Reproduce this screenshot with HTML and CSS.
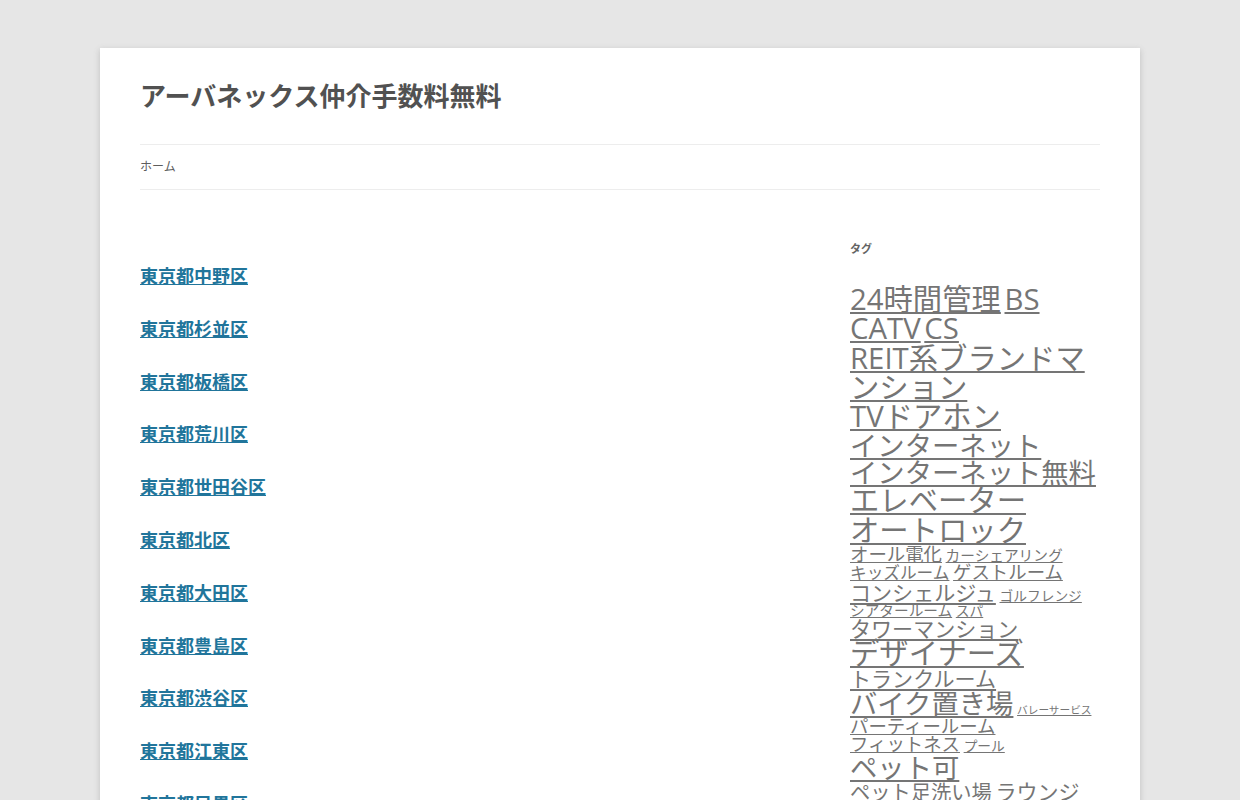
FILE: index.html
```html
<!DOCTYPE html>
<html lang="ja">
<head>
    <meta charset="UTF-8">
    <meta name="viewport" content="width=device-width, initial-scale=1.0">
    <title>アーバネックス仲介手数料無料</title>
    <link rel="stylesheet" href="styles.css">
</head>
<body>
    <div class="site">
        <header class="site-header">
            <h1 class="site-title"><a href="#">アーバネックス仲介手数料無料</a></h1>
            <nav class="main-navigation">
                <ul class="nav-menu">
                    <li><a href="#">ホーム</a></li>
                </ul>
            </nav>
        </header>

        <div class="site-main">
            <div class="site-content">
                <div class="entry-content">
                    <h2><a href="#">東京都中野区</a></h2>
                    <h2><a href="#">東京都杉並区</a></h2>
                    <h2><a href="#">東京都板橋区</a></h2>
                    <h2><a href="#">東京都荒川区</a></h2>
                    <h2><a href="#">東京都世田谷区</a></h2>
                    <h2><a href="#">東京都北区</a></h2>
                    <h2><a href="#">東京都大田区</a></h2>
                    <h2><a href="#">東京都豊島区</a></h2>
                    <h2><a href="#">東京都渋谷区</a></h2>
                    <h2><a href="#">東京都江東区</a></h2>
                    <h2><a href="#">東京都目黒区</a></h2>
                    <h2><a href="#">東京都港区</a></h2>
                </div>
            </div>

            <!-- sidebar -->
            <div class="widget-area">
                <div class="widget">
                    <h3 class="widget-title">タグ</h3>
                    <div class="tagcloud">
                        <a href="#" class="t22">24時間管理</a>
                        <a href="#" class="t22">BS</a>
                        <a href="#" class="t22">CATV</a>
                        <a href="#" class="t22">CS</a>
                        <a href="#" class="t22">REIT系ブランドマンション</a>
                        <a href="#" class="t22">TVドアホン</a>
                        <a href="#" class="t21">インターネット</a>
                        <a href="#" class="t21">インターネット無料</a>
                        <a href="#" class="t22">エレベーター</a>
                        <a href="#" class="t22">オートロック</a>
                        <a href="#" class="t14">オール電化</a>
                        <a href="#" class="t11">カーシェアリング</a>
                        <a href="#" class="t12">キッズルーム</a>
                        <a href="#" class="t14">ゲストルーム</a>
                        <a href="#" class="t16">コンシェルジュ</a>
                        <a href="#" class="t10">ゴルフレンジ</a>
                        <a href="#" class="t11">シアタールーム</a>
                        <a href="#" class="t10">スパ</a>
                        <a href="#" class="t16">タワーマンション</a>
                        <a href="#" class="t22">デザイナーズ</a>
                        <a href="#" class="t16">トランクルーム</a>
                        <a href="#" class="t20">バイク置き場</a>
                        <a href="#" class="t8">バレーサービス</a>
                        <a href="#" class="t14">パーティールーム</a>
                        <a href="#" class="t14">フィットネス</a>
                        <a href="#" class="t10">プール</a>
                        <a href="#" class="t20">ペット可</a>
                        <a href="#" class="t15">ペット足洗い場</a>
                        <a href="#" class="t16">ラウンジ</a>
                        <a href="#" class="t12">ルーフバルコニー</a>
                        <a href="#" class="t18">宅配ボックス</a>
                        <a href="#" class="t14">防犯カメラ</a>
                    </div>
                </div>
            </div>
        </div>
    </div>
</body>
</html>
```

FILE: styles.css
```css
html, body {
    margin: 0;
    padding: 0;
}
body {
    background-color: #e6e6e6;
    font-family: "Open Sans", "Noto Sans CJK JP", sans-serif;
    font-size: 14px;
    color: #444;
}
a {
    color: #21759b;
}
.site {
    max-width: 960px;
    margin: 48px auto;
    padding: 0 40px;
    background-color: #fff;
    box-shadow: 0 2px 6px rgba(100, 100, 100, 0.3);
    overflow: hidden;
}
.site-header {
    padding: 24px 0 0;
}
.site-title {
    margin: 0;
    font-size: 26px;
    line-height: 48px;
    font-weight: bold;
}
.site-title a {
    color: #515151;
    text-decoration: none;
}
.main-navigation {
    margin-top: 24px;
    border-top: 1px solid #ededed;
    border-bottom: 1px solid #ededed;
}
.nav-menu {
    list-style: none;
    margin: 0;
    padding: 0;
}
.nav-menu li {
    font-size: 12px;
    line-height: 44px;
}
.nav-menu li a {
    color: #5e5e5e;
    text-decoration: none;
}
.site-main {
    display: flex;
    justify-content: space-between;
    padding-top: 48px;
}
.site-content {
    width: 65.1%;
}
.entry-content h2 {
    font-size: 18px;
    line-height: 1.6;
    margin: 24px 0;
    font-weight: bold;
}
.entry-content h2 a {
    color: #21759b;
}
.widget-area {
    width: 250px;
    margin-top: -1px;
}
.widget-title {
    margin: 0 0 24px;
    font-size: 11px;
    line-height: 24px;
    font-weight: bold;
    color: #636363;
}
.tagcloud {
    line-height: 1;
    word-break: keep-all;
    overflow-wrap: anywhere;
}
.tagcloud a {
    color: #757575;
    line-height: 1;
}
.t8 { font-size: 8pt; }
.t10 { font-size: 10.3pt; }
.t11 { font-size: 11pt; }
.t12 { font-size: 12.5pt; }
.t14 { font-size: 13.8pt; }
.t15 { font-size: 15.2pt; }
.t16 { font-size: 15.8pt; }
.t18 { font-size: 18pt; }
.t20 { font-size: 20.5pt; }
.t21 { font-size: 20.5pt; }
.t22 { font-size: 22pt; }
```
